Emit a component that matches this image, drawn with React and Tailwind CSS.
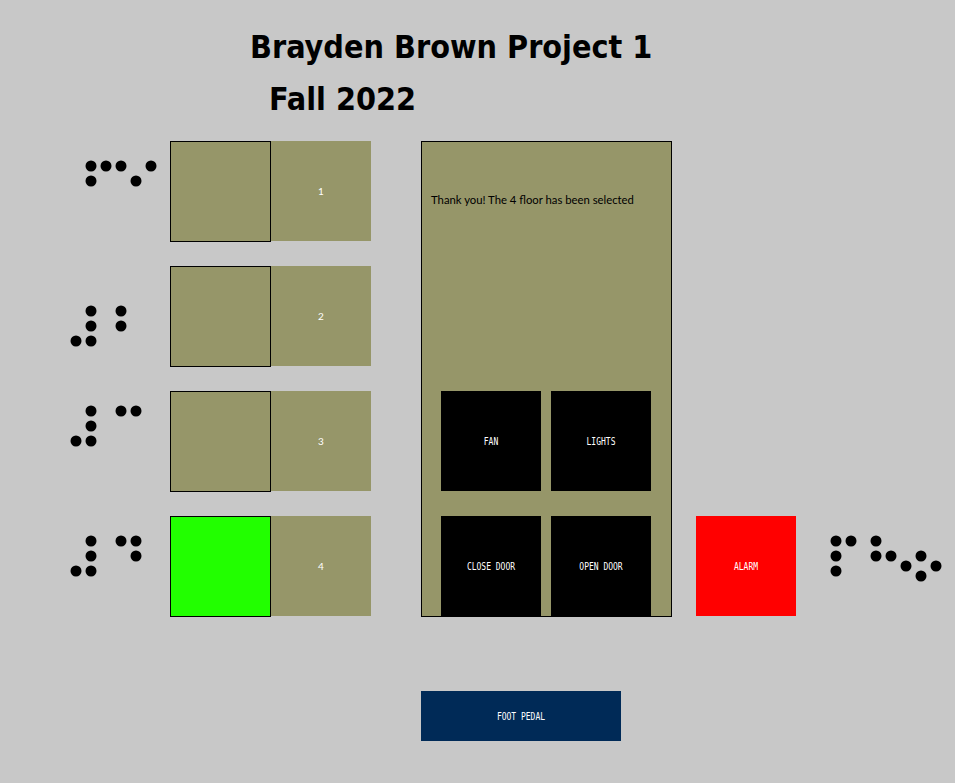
import React from "react";

const OLIVE = "bg-[#969669]";

function Braille({ dots, w, h }) {
  return (
    <svg width={w} height={h} className="shrink-0 block">
      {dots.map(([x, y], i) => (
        <circle key={i} cx={x} cy={y} r="5.5" fill="#000" />
      ))}
    </svg>
  );
}

const floors = [
  { n: "1", dots: [[91, 25], [106, 25], [121, 25], [151, 25], [91, 40], [136, 40]], on: false },
  { n: "2", dots: [[91, 45], [121, 45], [91, 60], [121, 60], [76, 75], [91, 75]], on: false },
  { n: "3", dots: [[91, 20], [121, 20], [136, 20], [91, 35], [76, 50], [91, 50]], on: false },
  { n: "4", dots: [[91, 25], [121, 25], [136, 25], [91, 40], [136, 40], [76, 55], [91, 55]], on: true },
];

const alarmDots = [
  [836, 541], [851, 541], [876, 541], [836, 556], [876, 556], [891, 556],
  [906, 566], [921, 556], [936, 566], [921, 576], [836, 571],
].map(([x, y]) => [x - 796, y - 516]);

function Label({ children }) {
  return (
    <span className="text-white text-[8px] leading-[8px] scale-y-[1.4] whitespace-pre translate-y-[1px]" style={{ fontFamily: '"DejaVu Sans Mono", monospace' }}>
      {children}
    </span>
  );
}

export default function App() {
  return (
    <div className="w-[955px] h-[783px] bg-[#c8c8c8] overflow-hidden flex flex-col" style={{ fontFamily: '"DejaVu Sans Condensed", "DejaVu Sans", sans-serif' }}>
      <div className="mt-[31px] h-[32px] pl-[250px] text-[32px] leading-[32px] font-bold text-black whitespace-nowrap" style={{ fontStretch: "condensed" }}>
        Brayden Brown Project 1
      </div>
      <div className="mt-[20px] h-[32px] pl-[269px] text-[32px] leading-[32px] font-bold text-black whitespace-nowrap" style={{ fontStretch: "condensed" }}>
        Fall 2022
      </div>

      <div className="mt-[26px] flex items-start">
        <div className="flex flex-col gap-[24px]">
          {floors.map((f) => (
            <div key={f.n} className="flex items-start h-[101px]">
              <Braille dots={f.dots} w={170} h={101} />
              <div className={`w-[101px] h-[101px] border border-black ${f.on ? "bg-[#22ff00]" : OLIVE}`} />
              <div className={`w-[100px] h-[100px] ${OLIVE} flex items-center justify-center`}>
                <span className="text-white text-[10px] leading-[10px]" style={{ fontFamily: 'Lato, sans-serif' }}>{f.n}</span>
              </div>
            </div>
          ))}
        </div>

        <div className={`ml-[50px] w-[251px] h-[476px] border border-black ${OLIVE} flex flex-col`}>
          <div className="pt-[52px] pl-[9px] text-[11.3px] leading-[12px] text-black whitespace-nowrap" style={{ fontFamily: 'Lato, sans-serif' }}>
            Thank you! The 4 floor has been selected
          </div>
          <div className="mt-auto ml-[19px] grid grid-cols-[100px_100px] grid-rows-[100px_100px] gap-x-[10px] gap-y-[25px]">
            <div className="bg-black flex items-center justify-center"><Label>FAN</Label></div>
            <div className="bg-black flex items-center justify-center"><Label>LIGHTS</Label></div>
            <div className="bg-black flex items-center justify-center"><Label>CLOSE DOOR</Label></div>
            <div className="bg-black flex items-center justify-center"><Label>OPEN DOOR</Label></div>
          </div>
        </div>

        <div className="ml-[24px] mt-[375px] w-[100px] h-[100px] bg-[#ff0000] flex items-center justify-center">
          <Label>ALARM</Label>
        </div>
        <div className="mt-[375px]">
          <Braille dots={alarmDots} w={159} h={100} />
        </div>
      </div>

      <div className="mt-[74px] ml-[421px] w-[200px] h-[50px] bg-[#002a57] flex items-center justify-center">
        <Label>FOOT PEDAL</Label>
      </div>
    </div>
  );
}
